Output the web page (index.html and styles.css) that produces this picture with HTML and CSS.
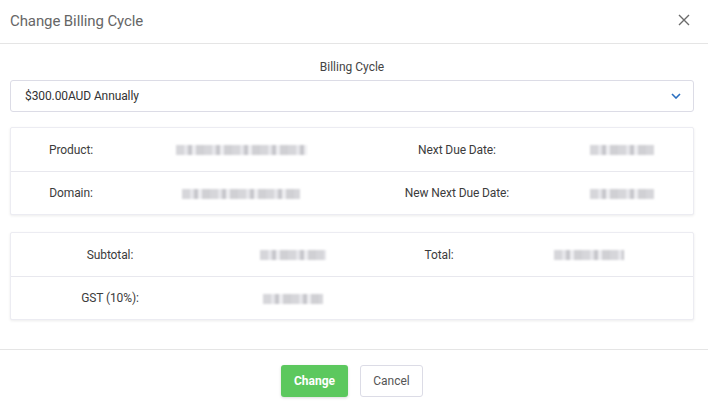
FILE: index.html
```html
<!DOCTYPE html>
<html lang="en">
<head>
<meta charset="UTF-8" />
<title>Change Billing Cycle</title>
<link rel="stylesheet" href="styles.css">
</head>
<body>
<div class="modal">
    <div class="modal-header">
        <h4 class="modal-title">Change Billing Cycle</h4>
        <span class="close">
            <svg width="12" height="12" viewBox="0 0 12 12"><path d="M1 1L11 11M11 1L1 11" stroke="#6b6b6b" stroke-width="1.4" fill="none"/></svg>
        </span>
    </div>
    <div class="modal-body">
        <label class="cycle-label">Billing Cycle</label>
        <div class="select">
            <span>$300.00AUD Annually</span>
            <svg width="10" height="6" viewBox="0 0 10 6"><path d="M1 1L5 5L9 1" stroke="#2a6fc1" stroke-width="1.6" fill="none"/></svg>
        </div>
        <div class="card card-info">
            <div class="row">
                <div class="lbl">Product:</div>
                <div class="val"><span class="blur" style="width:131px"></span></div>
                <div class="lbl">Next Due Date:</div>
                <div class="val"><span class="blur" style="width:64px"></span></div>
            </div>
            <div class="row">
                <div class="lbl">Domain:</div>
                <div class="val"><span class="blur" style="width:118px"></span></div>
                <div class="lbl">New Next Due Date:</div>
                <div class="val"><span class="blur" style="width:64px"></span></div>
            </div>
        </div>
        <div class="card card-total">
            <div class="row">
                <div class="lbl">Subtotal:</div>
                <div class="val"><span class="blur" style="width:66px"></span></div>
                <div class="lbl">Total:</div>
                <div class="val"><span class="blur" style="width:70px"></span></div>
            </div>
            <div class="row">
                <div class="lbl">GST (10%):</div>
                <div class="val"><span class="blur" style="width:60px"></span></div>
                <div class="lbl"></div>
                <div class="val"></div>
            </div>
        </div>
    </div>
    <div class="modal-footer">
        <button class="btn btn-success">Change</button>
        <button class="btn btn-default">Cancel</button>
    </div>
</div>
</body>
</html>
```
FILE: styles.css
```css
*{margin:0;padding:0;box-sizing:border-box;}
body{font:400 12px/1.5 Roboto,"Liberation Sans",Arial,sans-serif;color:#333;background:#fff;}
.modal{width:708px;height:411px;background:#fff;}
.modal-header{height:44px;border-bottom:1px solid #e5e5e5;display:flex;align-items:center;justify-content:space-between;padding:0 18px 0 10px;}
.modal-title{font-size:15px;font-weight:400;color:#666;letter-spacing:-0.1px;}
.close{display:flex;margin-top:-3px;}
.modal-body{padding:14px 14px 29px 10px;}
.cycle-label{display:block;text-align:center;color:#444;font-size:12px;line-height:18px;}
.select{margin-top:4px;height:32px;border:1px solid #dcdce6;border-radius:3px;display:flex;align-items:center;justify-content:space-between;padding:0 12px 0 14px;color:#333;}
.select span{font-size:12px;letter-spacing:-0.1px;}
.card{margin-top:16px;border:1px solid #ececf2;border-radius:2px;box-shadow:0 1px 3px rgba(0,0,0,0.08);background:#fff;}
.card-info{margin-top:15px;}
.card-total{margin-top:17px;}
.row{display:grid;height:43px;align-items:center;}
.row + .row{border-top:1px solid #e8e8ee;}
.card-info .row{grid-template-columns:120px 220px 212px 118px;}
.card-total .row{grid-template-columns:198px 168px 124px 176px;}
.lbl,.val{text-align:center;color:#3c3c3c;letter-spacing:-0.1px;}
.blur{display:inline-block;height:10px;vertical-align:middle;background:repeating-linear-gradient(90deg,#d6d6da 0 8px,#e6e6ea 8px 12px,#c6c6cb 12px 16px,#eeeef1 16px 20px,#d0d0d4 20px 28px);filter:blur(1.2px);}
.modal-footer{border-top:1px solid #e5e5e5;display:flex;justify-content:center;gap:12px;padding:15px 4px 0 0;}
.btn{height:32px;border-radius:3px;font:500 12px Roboto,"Liberation Sans",Arial,sans-serif;cursor:pointer;}
.btn-success{width:67px;background:#5cc85e;border:0;color:#fff;font-weight:700;box-shadow:0 1px 3px rgba(0,0,0,0.15);}
.btn-default{width:63px;background:#fff;border:1px solid #dcdce6;color:#555;font-weight:400;}
```
